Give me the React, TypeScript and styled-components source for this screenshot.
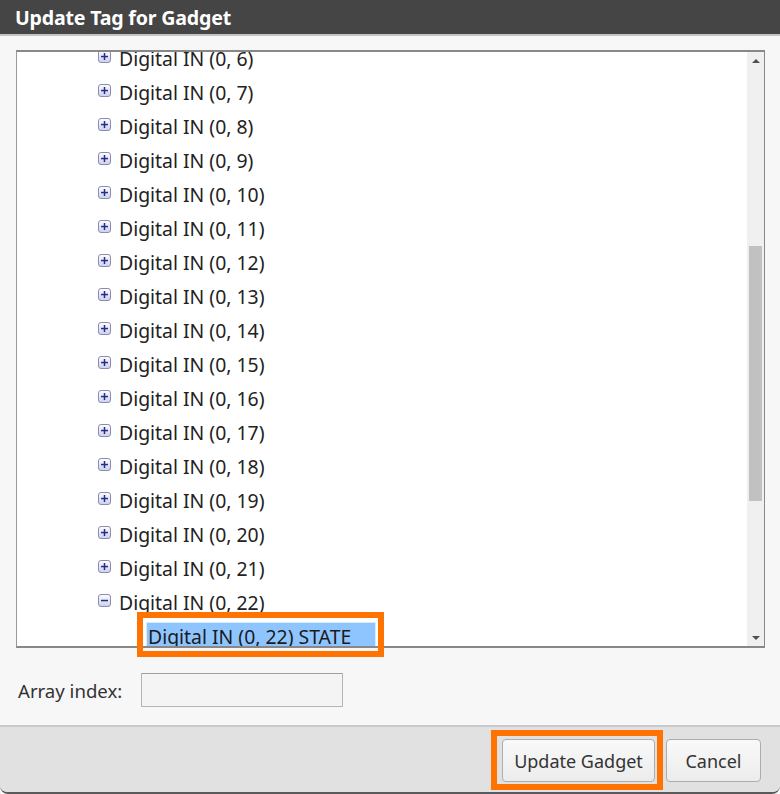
import React, { useLayoutEffect, useRef } from 'react'
import styled, { createGlobalStyle } from 'styled-components'

const GlobalStyle = createGlobalStyle`
  html, body {
    margin: 0;
    padding: 0;
    background: #f7f7f7;
  }
  body {
    font-family: "Noto Sans", "Open Sans", sans-serif;
  }
`

const Dialog = styled.div`
  position: relative;
  width: 780px;
  height: 794px;
  display: flex;
  flex-direction: column;
  background: #f7f7f7;
  box-sizing: border-box;
  border-bottom: 2px solid #5a5a5a;
  border-radius: 0 0 8px 8px;
  overflow: hidden;
`

const TitleBar = styled.div`
  height: 34px;
  flex: 0 0 34px;
  background: #454545;
  border-bottom: 2px solid #c4c4c4;
  display: flex;
  align-items: center;
  padding-left: 15px;
  color: #fff;
  font-weight: 700;
  font-size: 19.6px;
  letter-spacing: -0.2px;
`

const Body = styled.div`
  flex: 1;
  padding: 14px 15px 0 16px;
  display: flex;
  flex-direction: column;
`

const TreeBox = styled.div`
  height: 598px;
  box-sizing: border-box;
  border-top: 2px solid #888;
  border-bottom: 2px solid #888;
  border-left: 1px solid #999;
  border-right: 1px solid #888;
  background: #fff;
  display: flex;
`

const TreeList = styled.div`
  flex: 1;
  overflow: hidden;
`

const Row = styled.div<{ $indent: number }>`
  height: 34px;
  display: flex;
  align-items: center;
  padding-left: ${(p) => p.$indent}px;
  font-size: 19.4px;
  color: #222;
  white-space: nowrap;
`

const Toggle = styled.svg`
  width: 13px;
  height: 13px;
  margin-right: 8px;
  flex: 0 0 13px;
  margin-top: -3px;
`

const Selected = styled.span`
  background: #8fc5ff;
  border: 1px solid #d8ecff;
  padding: 1px 24px 0 1px;
  line-height: 26px;
  color: #1b1b1b;
`

const ScrollTrack = styled.div`
  width: 17px;
  flex: 0 0 17px;
  background: #f0f0f0;
  display: flex;
  flex-direction: column;
  align-items: center;
`

const Arrow = styled.div<{ $down?: boolean }>`
  height: 17px;
  flex: 0 0 17px;
  display: flex;
  align-items: center;
  justify-content: center;
  &::before {
    content: '';
    width: 0;
    height: 0;
    border-left: 4px solid transparent;
    border-right: 4px solid transparent;
    ${(p) => (p.$down ? 'border-top: 4px solid #505050;' : 'border-bottom: 4px solid #505050;')}
  }
`

const TrackArea = styled.div`
  flex: 1;
  width: 100%;
  display: flex;
  justify-content: center;
`

const Thumb = styled.div`
  width: 13px;
  height: 255px;
  margin-top: 177px;
  background: #c1c1c1;
`

const IndexRow = styled.div`
  display: flex;
  align-items: center;
  margin-top: 25px;
  padding-left: 2px;
  gap: 19px;
`

const Label = styled.label`
  font-size: 18.6px;
  color: #333;
`

const IndexInput = styled.input`
  width: 202px;
  height: 34px;
  box-sizing: border-box;
  border: 1px solid #b4b4b4;
  border-top-color: #a0a0a0;
  background: #f4f4f4;
  outline: none;
`

const Footer = styled.div`
  height: 67px;
  flex: 0 0 67px;
  box-sizing: border-box;
  background: #e1e1e1;
  border-top: 2px solid #c9c9c9;
  display: flex;
  justify-content: flex-end;
  align-items: center;
  gap: 11px;
  padding: 2px 19px 0 0;
`

const ButtonSlot = styled.div<{ $marked?: boolean }>`
  position: relative;
  display: flex;
  ${(p) =>
    p.$marked
      ? `&::after {
    content: '';
    position: absolute;
    top: -9px;
    right: -8px;
    bottom: -8px;
    left: -11px;
    border: 6px solid #ff7300;
    pointer-events: none;
  }`
      : ''}
`

const Button = styled.button<{ $w: number }>`
  width: ${(p) => p.$w}px;
  height: 43px;
  border: 1px solid #adadad;
  border-radius: 4px;
  background: linear-gradient(#f9f9f9, #ececec);
  font-family: "Noto Sans", "Open Sans", sans-serif;
  font-size: 18px;
  color: #333;
`

const Mark = styled.div`
  position: absolute;
  left: 137px;
  top: 612px;
  width: 247px;
  height: 45px;
  box-sizing: border-box;
  border: 6px solid #ff7300;
  pointer-events: none;
`

const PlusMinus: React.FC<{ open?: boolean }> = ({ open }) => (
  <Toggle viewBox="0 0 13 13">
    <defs>
      <linearGradient id="tg" x1="0" y1="0" x2="0" y2="1">
        <stop offset="0" stopColor="#ffffff" />
        <stop offset="1" stopColor="#ccd0ec" />
      </linearGradient>
    </defs>
    <rect x="0.5" y="0.5" width="12" height="12" rx="2.5" fill="url(#tg)" stroke="#8a8cb2" />
    <rect x="3" y="5.8" width="7" height="1.5" fill="#262c8c" />
    {!open && <rect x="5.75" y="3" width="1.5" height="7" fill="#262c8c" />}
  </Toggle>
)

const items = Array.from({ length: 17 }, (_, i) => i + 6)

export default function App() {
  const listRef = useRef<HTMLDivElement>(null)

  useLayoutEffect(() => {
    if (listRef.current) listRef.current.scrollTop = 11
  }, [])

  return (
    <>
      <GlobalStyle />
      <Dialog>
        <TitleBar>Update Tag for Gadget</TitleBar>
        <Body>
          <TreeBox>
            <TreeList ref={listRef}>
              {items.map((n) => (
                <Row key={n} $indent={81}>
                  <PlusMinus open={n === 22} />
                  Digital IN (0, {n})
                </Row>
              ))}
              <Row $indent={129}>
                <Selected>Digital IN (0, 22) STATE</Selected>
              </Row>
              <Row $indent={81} />
            </TreeList>
            <ScrollTrack>
              <Arrow />
              <TrackArea>
                <Thumb />
              </TrackArea>
              <Arrow $down />
            </ScrollTrack>
          </TreeBox>
          <IndexRow>
            <Label>Array index:</Label>
            <IndexInput />
          </IndexRow>
        </Body>
        <Footer>
          <ButtonSlot $marked>
            <Button $w={153}>Update Gadget</Button>
          </ButtonSlot>
          <ButtonSlot>
            <Button $w={95}>Cancel</Button>
          </ButtonSlot>
        </Footer>
        <Mark />
      </Dialog>
    </>
  )
}
